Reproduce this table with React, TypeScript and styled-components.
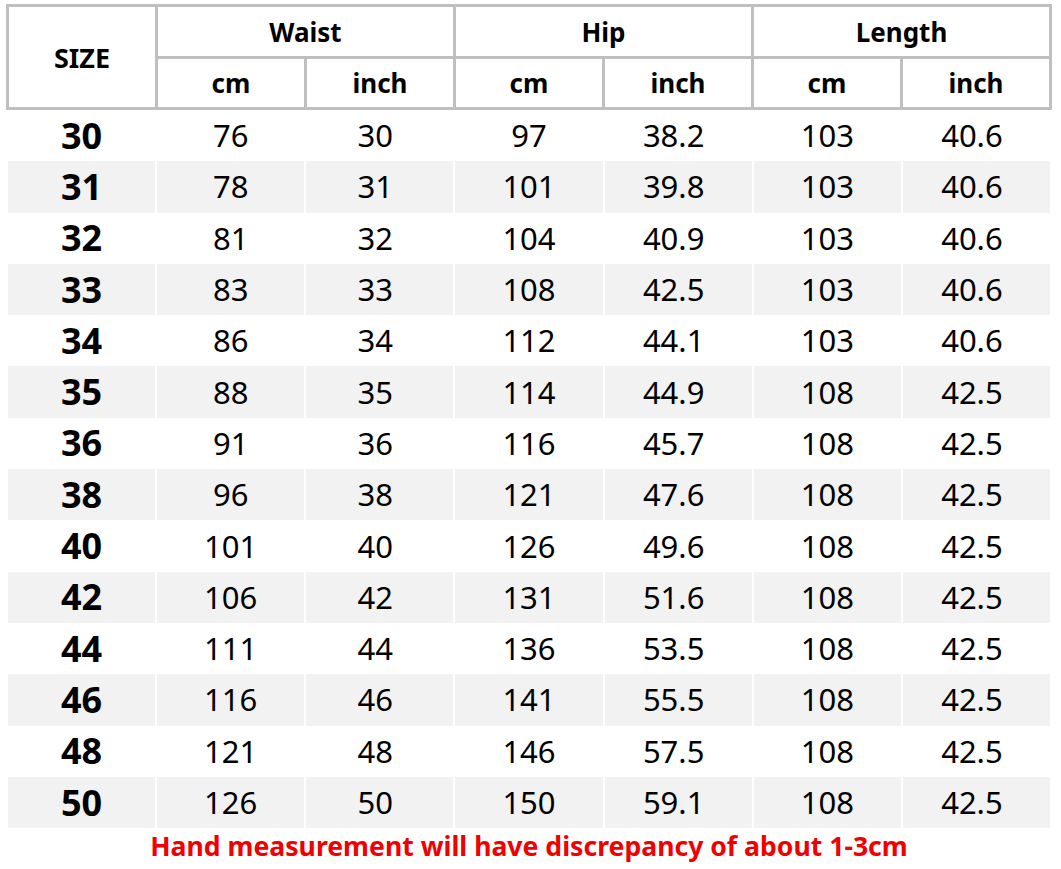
import React from "react";
import styled, { createGlobalStyle } from "styled-components";

const Global = createGlobalStyle`
  html, body { margin: 0; padding: 0; background: #fff; }
  body { font-family: "Noto Sans", "Open Sans", sans-serif; color: #000; }
`;

const Page = styled.div`
  width: 1061px;
  padding: 4px 0 0 6px;
  box-sizing: border-box;
`;

const Chart = styled.div`
  width: 1046px;
  display: flex;
  flex-direction: column;
`;

const Head = styled.div`
  display: grid;
  grid-template-columns: repeat(7, 1fr);
  grid-template-rows: 49px 48px;
  gap: 3px;
  padding: 3px;
  background: #bfbfbf;
`;

const HeadCell = styled.div<{ $col?: string; $row?: string; $size?: number }>`
  background: #fff;
  display: flex;
  align-items: center;
  justify-content: center;
  font-weight: 700;
  font-size: ${(p) => p.$size ?? 26}px;
  grid-column: ${(p) => p.$col ?? "auto"};
  grid-row: ${(p) => p.$row ?? "auto"};
`;

const Body = styled.div`
  display: flex;
  flex-direction: column;
  padding: 0 2px;
`;

const Row = styled.div`
  display: grid;
  grid-template-columns: repeat(7, 1fr);
  column-gap: 2px;
  height: 51.3px;
`;

const Cell = styled.div<{ $striped: boolean; $size?: boolean; $inch?: boolean }>`
  background: ${(p) => (p.$striped ? "#f2f2f2" : "#fff")};
  display: flex;
  align-items: center;
  justify-content: center;
  box-sizing: border-box;
  padding-right: ${(p) => (p.$inch ? 9 : 0)}px;
  font-size: ${(p) => (p.$size ? 36 : 31)}px;
  font-weight: ${(p) => (p.$size ? 700 : 400)};
  line-height: 1;
`;

const Note = styled.div`
  text-align: center;
  color: #f00000;
  font-weight: 700;
  font-size: 26.6px;
  margin-top: 0px;
`;

const rows: (string | number)[][] = [
  [30, 76, 30, 97, "38.2", 103, "40.6"],
  [31, 78, 31, 101, "39.8", 103, "40.6"],
  [32, 81, 32, 104, "40.9", 103, "40.6"],
  [33, 83, 33, 108, "42.5", 103, "40.6"],
  [34, 86, 34, 112, "44.1", 103, "40.6"],
  [35, 88, 35, 114, "44.9", 108, "42.5"],
  [36, 91, 36, 116, "45.7", 108, "42.5"],
  [38, 96, 38, 121, "47.6", 108, "42.5"],
  [40, 101, 40, 126, "49.6", 108, "42.5"],
  [42, 106, 42, 131, "51.6", 108, "42.5"],
  [44, 111, 44, 136, "53.5", 108, "42.5"],
  [46, 116, 46, 141, "55.5", 108, "42.5"],
  [48, 121, 48, 146, "57.5", 108, "42.5"],
  [50, 126, 50, 150, "59.1", 108, "42.5"],
];

export default function App() {
  return (
    <Page>
      <Global />
      <Chart>
        <Head>
          <HeadCell $col="1" $row="1 / span 2" $size={27}>SIZE</HeadCell>
          <HeadCell $col="2 / span 2" $row="1">Waist</HeadCell>
          <HeadCell $col="4 / span 2" $row="1">Hip</HeadCell>
          <HeadCell $col="6 / span 2" $row="1">Length</HeadCell>
          {["cm", "inch", "cm", "inch", "cm", "inch"].map((u, i) => (
            <HeadCell key={i} $row="2">{u}</HeadCell>
          ))}
        </Head>
        <Body>
          {rows.map((r, i) => (
            <Row key={i}>
              {r.map((v, j) => (
                <Cell
                  key={j}
                  $striped={i % 2 === 1}
                  $size={j === 0}
                  $inch={j > 0 && j % 2 === 0}
                >
                  {v}
                </Cell>
              ))}
            </Row>
          ))}
        </Body>
        <Note>Hand measurement will have discrepancy of about 1-3cm</Note>
      </Chart>
    </Page>
  );
}
